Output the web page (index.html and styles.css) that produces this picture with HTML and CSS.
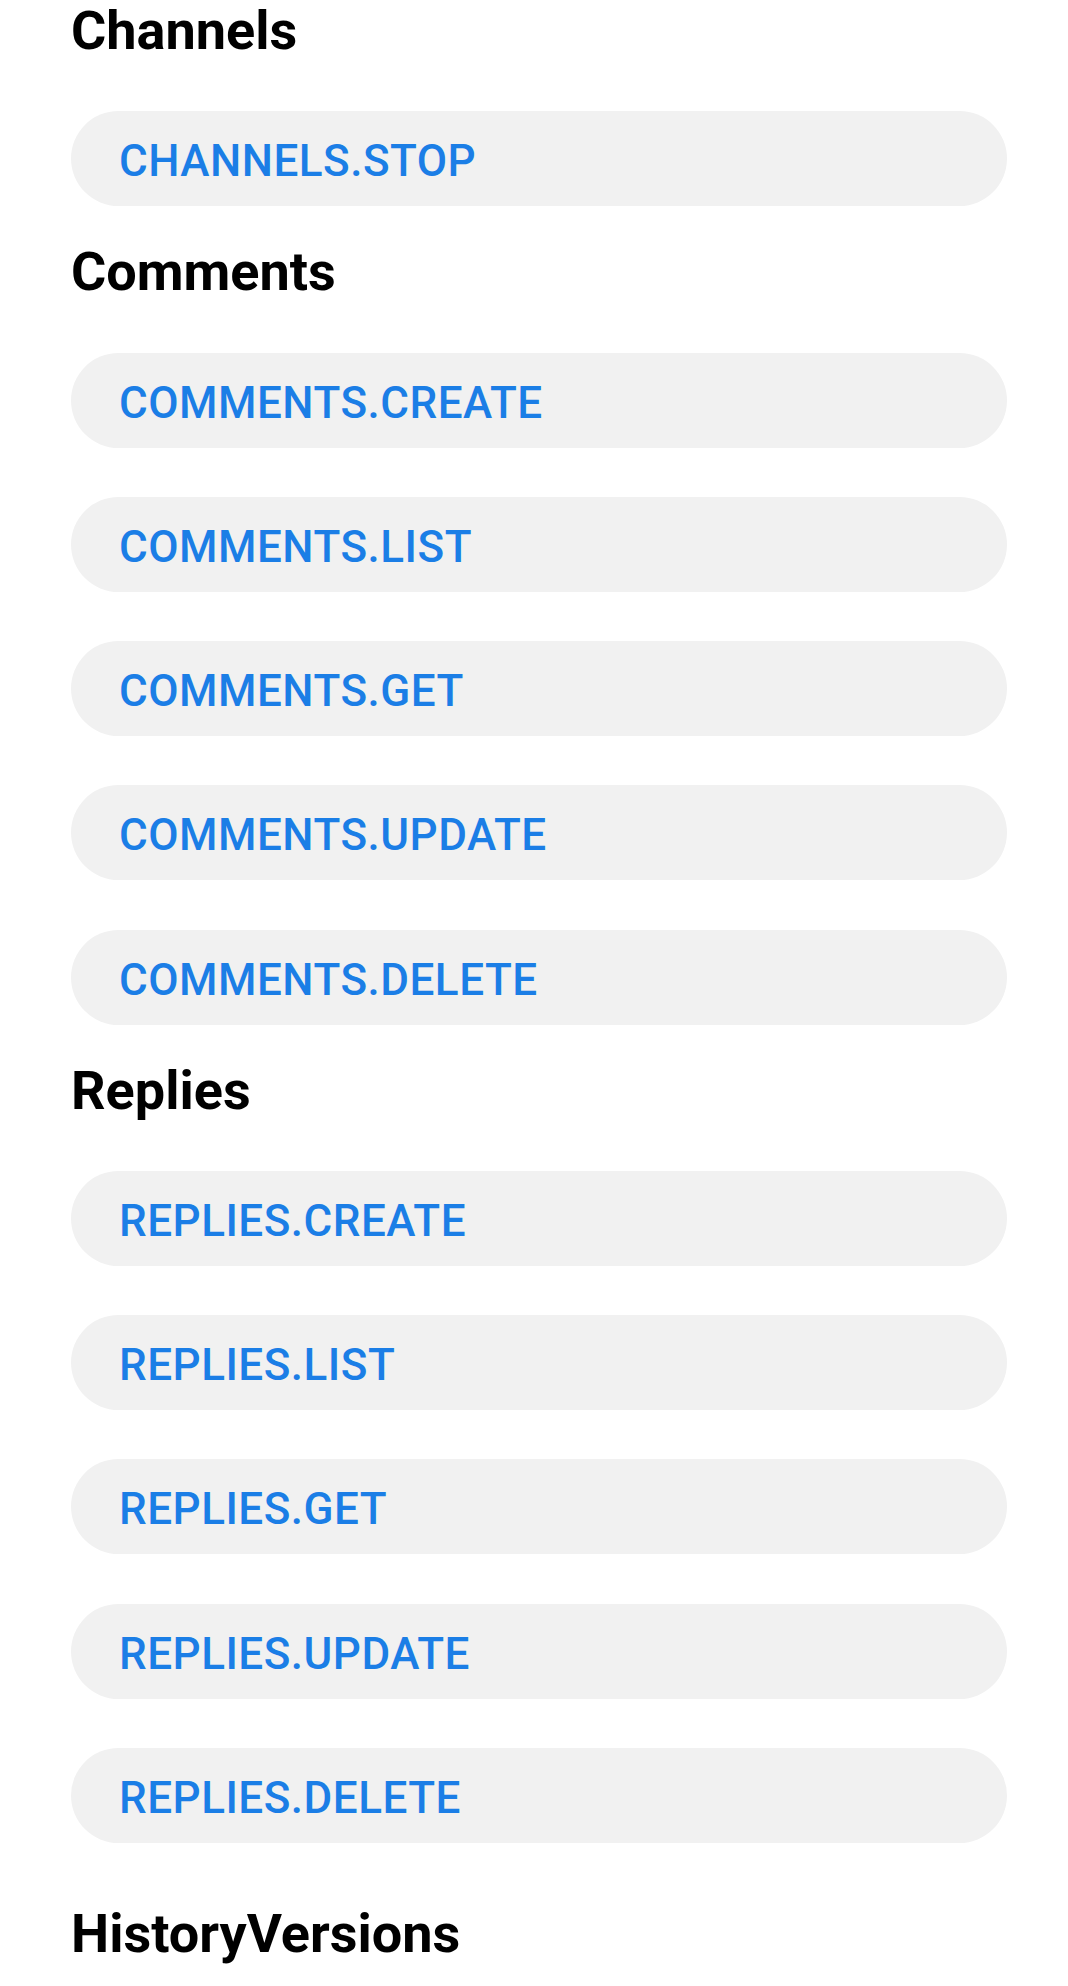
FILE: index.html
```html
<!DOCTYPE html>
<html lang="en">
<head>
<meta charset="utf-8">
<title>API methods</title>
<link rel="stylesheet" href="styles.css">
</head>
<body>
<main class="page">
  <section class="group">
    <h2 class="group-title">Channels</h2>
    <ul class="methods">
      <li class="method">CHANNELS.STOP</li>
    </ul>
  </section>
  <section class="group">
    <h2 class="group-title">Comments</h2>
    <ul class="methods">
      <li class="method">COMMENTS.CREATE</li>
      <li class="method">COMMENTS.LIST</li>
      <li class="method">COMMENTS.GET</li>
      <li class="method">COMMENTS.UPDATE</li>
      <li class="method">COMMENTS.DELETE</li>
    </ul>
  </section>
  <section class="group">
    <h2 class="group-title">Replies</h2>
    <ul class="methods">
      <li class="method">REPLIES.CREATE</li>
      <li class="method">REPLIES.LIST</li>
      <li class="method">REPLIES.GET</li>
      <li class="method">REPLIES.UPDATE</li>
      <li class="method">REPLIES.DELETE</li>
    </ul>
  </section>
  <section class="group group-spaced">
    <h2 class="group-title">HistoryVersions</h2>
  </section>
</main>
</body>
</html>
```

FILE: styles.css
```css
html, body {
  margin: 0;
  padding: 0;
  background: #ffffff;
}

body {
  font-family: Roboto, "Noto Sans", "Liberation Sans", sans-serif;
  overflow: hidden;
}

.page {
  display: flex;
  flex-direction: column;
  gap: 35px;
  padding: 0 61px 0 71px;
}

.group {
  display: flex;
  flex-direction: column;
  gap: 49.25px;
}

.group-spaced {
  margin-top: 25px;
}

.group-title {
  margin: 0;
  font-size: 54px;
  line-height: 62px;
  font-weight: 700;
  color: #000000;
}

.methods {
  list-style: none;
  margin: 0;
  padding: 0;
  display: flex;
  flex-direction: column;
  gap: 49.25px;
}

.method {
  height: 95px;
  display: flex;
  align-items: center;
  padding: 5px 0 0 48px;
  box-sizing: border-box;
  background: #f1f1f1;
  border-radius: 48px;
  font-size: 44px;
  letter-spacing: 0.5px;
  font-weight: 500;
  color: #1b7ee6;
}
```
